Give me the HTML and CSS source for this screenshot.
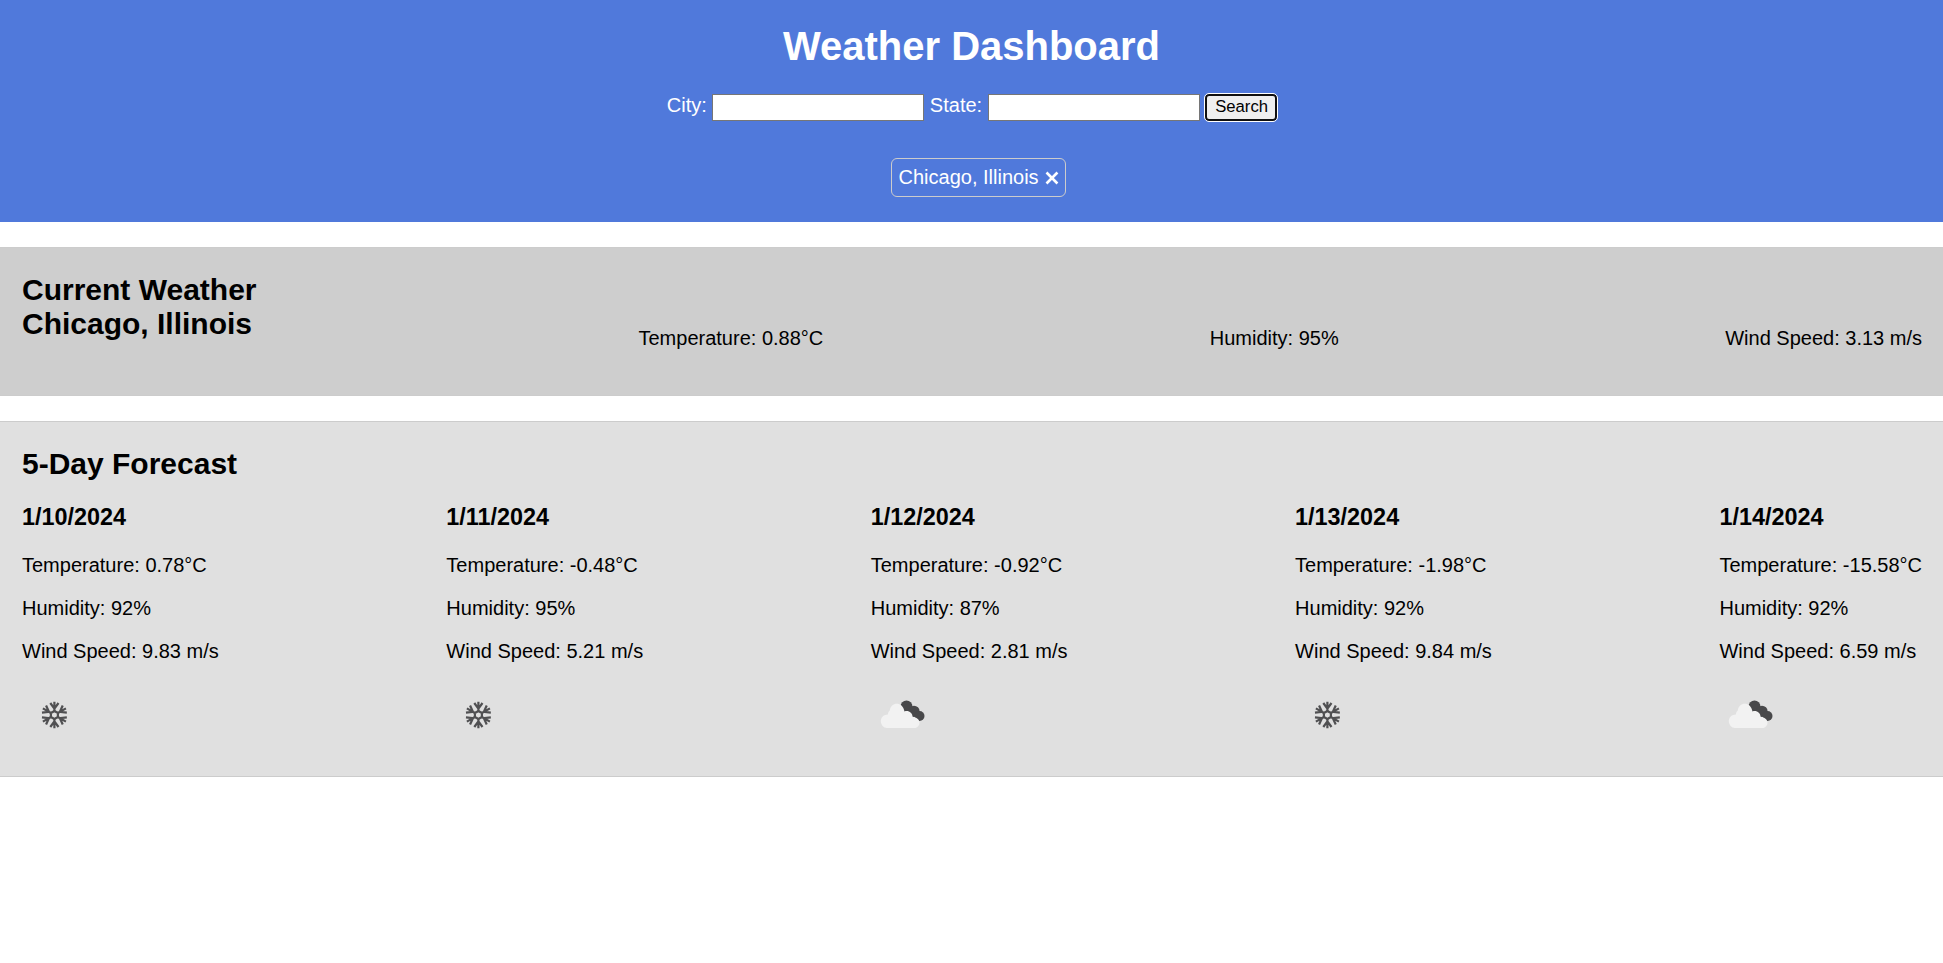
FILE: index.html
```html
<!DOCTYPE html>
<html lang="en">
<head>
<meta charset="utf-8">
<title>Weather Dashboard</title>
<link rel="stylesheet" href="styles.css">
</head>
<body>
<svg class="defs" aria-hidden="true">
  <symbol id="snow" viewBox="0 0 64 64">
    <g fill="none" stroke="#505052" stroke-width="2.2" transform="translate(.4 0)">
      <path d="M32 28l3.500 2v4l-3.500 2l-3.500-2v-4z"/>
      <g id="arm"><path d="M32 28V18.700M27.900 20L32 25.700L36.100 20"/></g>
      <use href="#arm" transform="rotate(60 32 32)"/>
      <use href="#arm" transform="rotate(120 32 32)"/>
      <use href="#arm" transform="rotate(180 32 32)"/>
      <use href="#arm" transform="rotate(240 32 32)"/>
      <use href="#arm" transform="rotate(300 32 32)"/>
    </g>
  </symbol>
  <symbol id="clouds" viewBox="0 0 64 64">
    <g fill="#48484a">
      <circle cx="35.500" cy="23.500" r="6"/>
      <circle cx="43" cy="28.300" r="5.600"/>
      <circle cx="48.500" cy="33" r="5"/>
    </g>
    <path fill="#f2f2f2" d="M16 45A6.600 6.600 0 0 1 17 31.500C17 29.500 17.700 28.200 18.800 27.500C19.500 19 31.500 17.500 33.500 28.500C37.500 27 41.500 30 41.600 34C45.500 34 48.500 36.500 48.500 39.500C48.500 43 46 45 43 45Z"/>
  </symbol>
</svg>
<header class="header">
  <h1>Weather Dashboard</h1>
  <form class="search">
    <label for="city">City:</label>
    <input id="city" class="field" type="text">
    <label for="state" class="state">State:</label>
    <input id="state" class="field" type="text">
    <button class="submit" type="button">Search</button>
  </form>
  <div class="history">
    <div class="chip">Chicago, Illinois
      <svg class="close" viewBox="0 0 14 14"><path d="M1.500 1.500l11 11M12.500 1.500l-11 11"/></svg>
    </div>
  </div>
</header>
<section class="panel current">
  <h2>Current Weather<br>Chicago, Illinois</h2>
  <p>Temperature: 0.88°C</p>
  <p>Humidity: 95%</p>
  <p>Wind Speed: 3.13 m/s</p>
</section>
<section class="panel forecast">
  <h2>5-Day Forecast</h2>
  <div class="days">
    <article><h3>1/10/2024</h3><p>Temperature: 0.78°C</p><p>Humidity: 92%</p><p>Wind Speed: 9.83 m/s</p><svg class="icon"><use href="#snow"/></svg></article>
    <article><h3>1/11/2024</h3><p>Temperature: -0.48°C</p><p>Humidity: 95%</p><p>Wind Speed: 5.21 m/s</p><svg class="icon"><use href="#snow"/></svg></article>
    <article><h3>1/12/2024</h3><p>Temperature: -0.92°C</p><p>Humidity: 87%</p><p>Wind Speed: 2.81 m/s</p><svg class="icon"><use href="#clouds"/></svg></article>
    <article><h3>1/13/2024</h3><p>Temperature: -1.98°C</p><p>Humidity: 92%</p><p>Wind Speed: 9.84 m/s</p><svg class="icon"><use href="#snow"/></svg></article>
    <article><h3>1/14/2024</h3><p>Temperature: -15.58°C</p><p>Humidity: 92%</p><p>Wind Speed: 6.59 m/s</p><svg class="icon"><use href="#clouds"/></svg></article>
  </div>
</section>
</body>
</html>
```
FILE: styles.css
```css
* { box-sizing: border-box; }
body { margin: 0; background: #fff; color: #000; font: 20px/23px "Liberation Sans", Arial, sans-serif; }
h1, h2, h3, p { margin: 0; }
.defs { position: absolute; width: 0; height: 0; }
.header { height: 222px; padding-top: 24px; background: #5079db; color: #fff; }
.header h1 { font-size: 40px; line-height: 45px; text-align: center; }
.search { display: flex; justify-content: center; margin-top: 25px; padding-left: 1px; height: 27px; }
.search label { margin-right: 5px; }
.search .state { margin: 0 6px; }
.field { width: 212px; height: 27px; margin: 0; padding: 1px 2px; border: 1px solid #767676; background: #fff; }
.submit { width: 72px; height: 27px; margin: 0 0 0 5px; padding: 0 0 2px 1px; border: 2px solid #101010; border-radius: 4px; outline: 1px solid #fff; background: #efefef; color: #000; font: 16.67px/19px "Liberation Sans", Arial, sans-serif; }
.history { display: flex; justify-content: center; margin-top: 37px; padding-left: 13px; }
.chip { display: flex; align-items: center; gap: 6px; width: 175px; height: 39px; padding: 0 6px 0 7px; border: 1px solid #ccc; border-radius: 6px; white-space: nowrap; }
.close { width: 14px; height: 14px; fill: none; stroke: #fff; stroke-width: 2.6; }
.panel { margin-top: 25px; padding: 25px 21px 25px 22px; border: 1px solid #ccc; border-width: 1px 0; }
.panel h2 { font-size: 30px; line-height: 34px; }
.current { display: flex; justify-content: space-between; align-items: flex-end; height: 149px; background: #cecece; }
.current h2 { align-self: flex-start; width: 230px; white-space: nowrap; }
.current p { margin-bottom: 20px; }
.forecast { height: 356px; background: #e0e0e0; }
.days { display: grid; grid-template-columns: repeat(4, 1fr) auto; margin-top: 23px; }
.days h3 { margin-bottom: 23px; font-size: 23.4px; line-height: 27px; }
.days p { margin-bottom: 20px; }
.icon { display: block; width: 64px; height: 64px; }
```
